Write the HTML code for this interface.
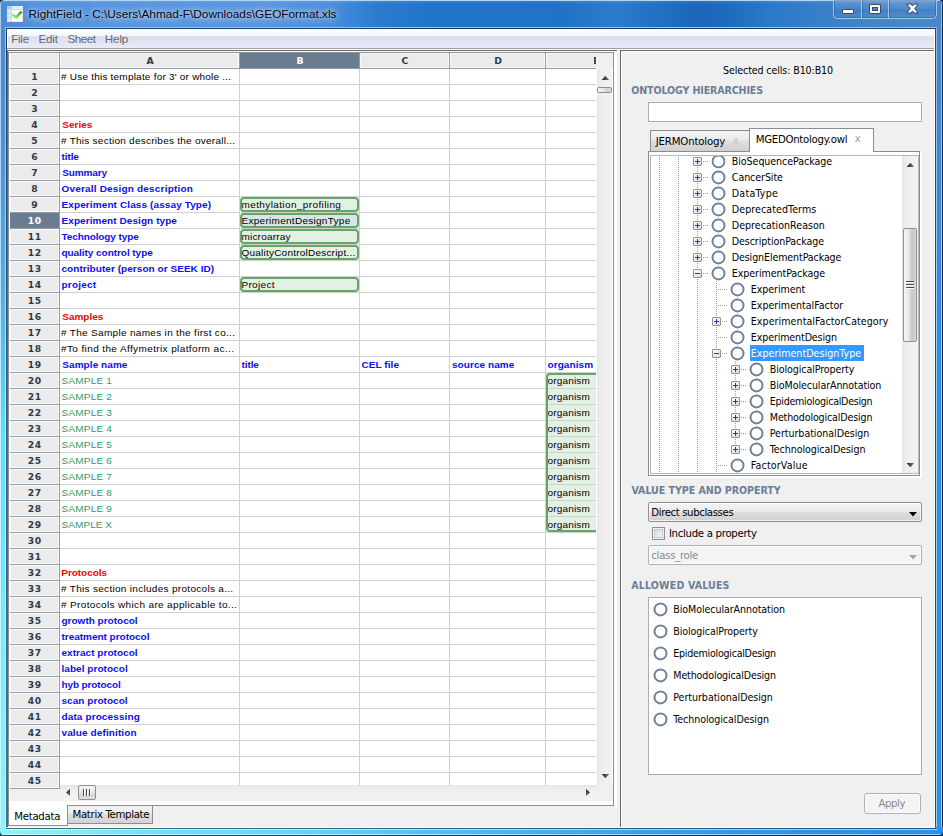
<!DOCTYPE html>
<html><head><meta charset="utf-8"><title>RightField</title>
<style>
html,body{margin:0;padding:0}
body{width:943px;height:836px;overflow:hidden;position:relative;background:#f0f0f0;font-family:'Liberation Sans',sans-serif;font-size:11px;color:#000}
div{position:absolute;box-sizing:border-box;white-space:nowrap}
svg{position:absolute}
.rad{width:14px;height:14px;border:2px solid #6f8199;border-radius:50%;background:#fff;transform:translate(.5px,.4px)}
.exp{width:9px;height:9px;border:1px solid #919191;background:linear-gradient(135deg,#fff,#d9d9d9);border-radius:1px}
.exp:before{content:"";position:absolute;left:1px;top:3px;width:5px;height:1px;background:#2b3f8f}
.exp.p:after{content:"";position:absolute;left:3px;top:1px;width:1px;height:5px;background:#2b3f8f}
.vd{width:1px;background:repeating-linear-gradient(#9a9a9a 0,#9a9a9a 1px,transparent 1px,transparent 2px)}
.hd{height:1px;background:repeating-linear-gradient(90deg,#9a9a9a 0,#9a9a9a 1px,transparent 1px,transparent 2px)}
</style></head><body>

<div style="left:0px;top:0px;width:943px;height:29px;background:linear-gradient(90deg,#4a8bd3 0,#5090da 30px,#5795de 110px,#5795de 260px,#4a8edc 330px,#2c7cd0 375px,#2074c8 430px,#2072c6 560px,#2c7cce 615px,#2371c4 655px,#1c66b8 695px,#1e6abc 725px,#2d79ca 775px,#3a80c8 830px,#4585ca 880px,#4886cb 943px);"></div>
<div style="left:0px;top:1px;width:943px;height:3px;background:linear-gradient(rgba(255,255,255,.10),rgba(255,255,255,0));"></div>
<div style="left:3px;top:0px;width:937px;height:1px;background:#b5d3f0;"></div>
<div style="left:0px;top:29px;width:6px;height:807px;background:linear-gradient(#4a8bd3 0,#4d93d8 15%,#55b4e8 35%,#63dcfd 50%,#7ce8fe 75%,#8cf4ff 100%);"></div>
<div style="left:0px;top:0px;width:1px;height:836px;background:linear-gradient(#a9cbee 0,#b4daf4 30%,#c8f0fb 50%,#c8f6ff 100%);"></div>
<div style="left:5px;top:27px;width:1px;height:802px;background:linear-gradient(#9cc4ec 0,#a8d8f4 30%,#bff4ff 50%,#c4f7ff 100%);"></div>
<div style="left:6px;top:28px;width:1px;height:801px;background:linear-gradient(#1c3e66 0,#25506c 30%,#2f6272 50%,#3f6b72 100%);"></div>
<div style="left:935px;top:28px;width:8px;height:808px;background:linear-gradient(#4786cb 0,#4186d1 10%,#328be0 32%,#2b8fe6 50%,#2b8fe6 100%);"></div>
<div style="left:934px;top:29px;width:1px;height:799px;background:#fff;"></div>
<div style="left:935px;top:28px;width:1px;height:801px;background:#1f4f7a;"></div>
<div style="left:936px;top:27px;width:1px;height:803px;background:linear-gradient(#8fb6e2 0,#a5d0f5 30%,#a5d0f5 100%);"></div>
<div style="left:941px;top:4px;width:1px;height:832px;background:linear-gradient(#8fb6e2 0,#a5d3fa 30%,#a5d3fa 100%);"></div>
<div style="left:942px;top:4px;width:1px;height:832px;background:#06284e;"></div>
<div style="left:937px;top:1px;width:4px;height:28px;background:#4786cb;"></div>
<div style="left:0px;top:827px;width:943px;height:9px;background:linear-gradient(90deg,#8cf4ff 0,#6fe2fc 150px,#5bd7fb 310px,#46bdf3 470px,#35a3ec 640px,#2c92e8 800px,#2b8fe6 943px);"></div>
<div style="left:7px;top:827px;width:928px;height:1px;background:#fff;"></div>
<div style="left:6px;top:828px;width:930px;height:1px;background:linear-gradient(90deg,#3f6b72 0,#2f6678 35%,#25597a 70%,#1f4f7a 100%);"></div>
<div style="left:5px;top:829px;width:932px;height:1px;background:rgba(255,255,255,.58);"></div>
<div style="left:3px;top:834px;width:937px;height:1px;background:rgba(255,255,255,.58);"></div>
<div style="left:3px;top:835px;width:937px;height:1px;background:linear-gradient(90deg,#2a4a50 0,#1a4a5a 35%,#0c3558 70%,#06284e 100%);"></div>
<svg style="left:0;top:0" width="4" height="4"><path d="M0 0H4A4 4 0 0 0 0 4Z" fill="#0a2a55"/></svg>
<svg style="left:939px;top:0" width="4" height="5"><path d="M4 0H0A4 5 0 0 1 4 5Z" fill="#0a2a55"/></svg>
<svg style="left:0;top:831px" width="5" height="5"><path d="M0 5H5A5 5 0 0 1 0 0Z" fill="#2a4a50"/></svg>
<svg style="left:938px;top:831px" width="5" height="5"><path d="M5 5H0A5 5 0 0 0 5 0Z" fill="#06284e"/></svg>
<div style="left:6px;top:27px;width:930px;height:1px;background:#9cc4ec;"></div>
<div style="left:6px;top:28px;width:930px;height:1px;background:#1c3e66;"></div>
<div style="left:7px;top:6px;width:16px;height:16px;background:#fff;border:1px solid #dfe6ef;border-bottom-color:#f1e4d8;border-right-color:#f1e4d8"></div>
<div style="left:7px;top:6px;width:5px;height:16px;background:linear-gradient(#a9ccf8 0,#a9ccf8 3px,#c3d6ec 3px,#c3d6ec 4px,#dce9f8 4px,#dce9f8 7px,#c3d6ec 7px,#c3d6ec 8px,#dce9f8 8px,#dce9f8 11px,#c3d6ec 11px,#c3d6ec 12px,#dce9f8 12px);"></div>
<div style="left:12px;top:6px;width:11px;height:3px;background:#e3edf8;"></div>
<div style="left:11px;top:6px;width:1px;height:16px;background:#c3d6ec;"></div>
<div style="left:7px;top:9px;width:16px;height:1px;background:#c9d9ea;"></div>
<svg style="left:11px;top:9px" width="13" height="12" viewBox="0 0 13 12"><defs><linearGradient id="gk" x1="1" y1="0" x2="0.3" y2="1"><stop offset="0" stop-color="#189418"/><stop offset="1" stop-color="#6cff6c"/></linearGradient></defs><path d="M1.6 5.6 L5 8.6 L10.6 2.6" fill="none" stroke="url(#gk)" stroke-width="2.3" stroke-linejoin="miter"/></svg>
<div style="left:28.5px;top:4px;line-height:20px;font-family:'Liberation Sans',sans-serif;font-size:11.8px;color:#05050f;font-weight:normal;letter-spacing:0.010px;text-shadow:0 0 9px rgba(255,255,255,.8),0 0 6px rgba(255,255,255,.55),0 0 3px rgba(255,255,255,.3)">RightField - C:\Users\Ahmad-F\Downloads\GEOFormat.xls</div>
<div style="left:833px;top:0px;width:104px;height:19px;background:linear-gradient(rgba(255,255,255,.16),rgba(255,255,255,.04) 50%,rgba(0,0,30,.04) 50%,rgba(255,255,255,.06));border:1px solid #a6c6e8;border-top:none;border-radius:0 0 5px 5px;box-shadow:inset 0 0 0 1px rgba(20,60,120,.35)"></div>
<div style="left:861px;top:0px;width:1px;height:18px;background:#a6c6e8;"></div>
<div style="left:862px;top:0px;width:1px;height:18px;background:rgba(20,60,120,.35);"></div>
<div style="left:888px;top:0px;width:1px;height:18px;background:#a6c6e8;"></div>
<div style="left:889px;top:0px;width:1px;height:18px;background:rgba(20,60,120,.35);"></div>
<div style="left:842px;top:9px;width:12px;height:5px;background:#fff;border:1px solid #3c4a62;border-radius:1px"></div>
<div style="left:869px;top:4px;width:12px;height:10px;background:#fff;border:1px solid #3c4a62;border-radius:1px"></div>
<div style="left:872px;top:7px;width:6px;height:4px;background:#4a86c8;border:1px solid #3c4a62"></div>
<svg style="left:906px;top:3px" width="13" height="11" viewBox="0 0 13 11"><path d="M0.8 1 H5 L6.5 3.1 L8 1 H12.2 L8.7 5.5 L12.2 10 H8 L6.5 7.9 L5 10 H0.8 L4.3 5.5 Z" fill="#fff" stroke="#39465c" stroke-width="1"/></svg>
<div style="left:7px;top:29px;width:927px;height:798px;background:#f0f0f0;"></div>
<div style="left:7px;top:29px;width:927px;height:19px;background:linear-gradient(#fefeff 0,#f5f6fb 7px,#dcdfee 7px,#dfe2f0 11px,#e9ebf6 19px);"></div>
<div style="left:7px;top:29px;width:1px;height:19px;background:#fff;"></div>
<div style="left:11.3px;top:29px;line-height:20px;font-family:'Liberation Sans',sans-serif;font-size:11.6px;color:#6a676c;font-weight:normal;letter-spacing:-0.297px;">File</div>
<div style="left:38.4px;top:29px;line-height:20px;font-family:'Liberation Sans',sans-serif;font-size:11.6px;color:#6a676c;font-weight:normal;letter-spacing:-0.146px;">Edit</div>
<div style="left:67.4px;top:29px;line-height:20px;font-family:'Liberation Sans',sans-serif;font-size:11.6px;color:#6a676c;font-weight:normal;letter-spacing:-0.423px;">Sheet</div>
<div style="left:104.8px;top:29px;line-height:20px;font-family:'Liberation Sans',sans-serif;font-size:11.6px;color:#6a676c;font-weight:normal;letter-spacing:-0.115px;">Help</div>
<div style="left:7px;top:48px;width:927px;height:1px;background:#a0a0a0;"></div>
<div style="left:7px;top:49px;width:927px;height:1px;background:#fff;"></div>
<div style="left:7px;top:50px;width:610px;height:777px;background:#fff;"></div>
<div style="left:7px;top:50px;width:610px;height:1px;background:#696969;"></div>
<div style="left:7px;top:50px;width:1px;height:777px;background:#696969;"></div>
<div style="left:8px;top:806px;width:609px;height:21px;background:#f0f0f0;"></div>
<div style="left:8px;top:52px;width:606px;height:754px;background:#8b909b;"></div>
<div style="left:9px;top:53px;width:604px;height:752px;background:#fff;"></div>
<div style="left:618px;top:50px;width:2px;height:777px;background:#f0f0f0;"></div>
<div style="left:614px;top:806px;width:2px;height:21px;background:#f0f0f0;"></div>
<div style="left:10px;top:53px;width:603px;height:16px;background:#f0f0f0;"></div>
<div style="left:10px;top:53px;width:586px;height:15px;background:#ebebeb;"></div>
<div style="left:10px;top:69px;width:49px;height:720px;background:#ebebeb;"></div>
<div style="left:10px;top:789px;width:50px;height:12px;background:#f0f0f0;"></div>
<div style="left:60px;top:53px;width:179px;height:15px;background:transparent;border:1px solid #f9f9f9"></div>
<div style="left:60px;top:51px;width:180px;line-height:20px;text-align:center;font-family:'DejaVu Sans','Liberation Sans',sans-serif;font-weight:bold;font-size:9.3px;color:#2f3b48">A</div>
<div style="left:240px;top:53px;width:119px;height:15px;background:#6b7c8e;"></div>
<div style="left:240px;top:51px;width:120px;line-height:20px;text-align:center;font-family:'DejaVu Sans','Liberation Sans',sans-serif;font-weight:bold;font-size:9.3px;color:#fff">B</div>
<div style="left:360px;top:53px;width:89px;height:15px;background:transparent;border:1px solid #f9f9f9"></div>
<div style="left:360px;top:51px;width:90px;line-height:20px;text-align:center;font-family:'DejaVu Sans','Liberation Sans',sans-serif;font-weight:bold;font-size:9.3px;color:#2f3b48">C</div>
<div style="left:450px;top:53px;width:95px;height:15px;background:transparent;border:1px solid #f9f9f9"></div>
<div style="left:450px;top:51px;width:96px;line-height:20px;text-align:center;font-family:'DejaVu Sans','Liberation Sans',sans-serif;font-weight:bold;font-size:9.3px;color:#2f3b48">D</div>
<div style="left:10px;top:53px;width:49px;height:15px;background:transparent;border:1px solid #f9f9f9"></div>
<div style="left:546px;top:53px;width:50px;height:15px;background:transparent;border:1px solid #f9f9f9;border-right:none"></div>
<div style="left:594px;top:51px;width:2px;height:20px;overflow:hidden;line-height:20px;font-family:'DejaVu Sans','Liberation Sans',sans-serif;font-weight:bold;font-size:9.3px;color:#2f3b48;text-indent:-1px">E</div>
<div style="left:10px;top:68px;width:586px;height:1px;background:#8b9db1;"></div>
<div style="left:59px;top:53px;width:1px;height:15px;background:#8b9db1;"></div>
<div style="left:239px;top:53px;width:1px;height:15px;background:#8b9db1;"></div>
<div style="left:359px;top:53px;width:1px;height:15px;background:#8b9db1;"></div>
<div style="left:449px;top:53px;width:1px;height:15px;background:#8b9db1;"></div>
<div style="left:545px;top:53px;width:1px;height:15px;background:#8b9db1;"></div>
<div style="left:59px;top:69px;width:1px;height:720px;background:#8b9db1;"></div>
<div style="left:239px;top:69px;width:1px;height:716px;background:#d0d0d0;"></div>
<div style="left:359px;top:69px;width:1px;height:716px;background:#d0d0d0;"></div>
<div style="left:449px;top:69px;width:1px;height:716px;background:#d0d0d0;"></div>
<div style="left:545px;top:69px;width:1px;height:716px;background:#d0d0d0;"></div>
<div style="left:60px;top:84px;width:536px;height:1px;background:#d0d0d0;"></div>
<div style="left:10px;top:84px;width:49px;height:1px;background:#8b9db1;"></div>
<div style="left:60px;top:100px;width:536px;height:1px;background:#d0d0d0;"></div>
<div style="left:10px;top:100px;width:49px;height:1px;background:#8b9db1;"></div>
<div style="left:60px;top:116px;width:536px;height:1px;background:#d0d0d0;"></div>
<div style="left:10px;top:116px;width:49px;height:1px;background:#8b9db1;"></div>
<div style="left:60px;top:132px;width:536px;height:1px;background:#d0d0d0;"></div>
<div style="left:10px;top:132px;width:49px;height:1px;background:#8b9db1;"></div>
<div style="left:60px;top:148px;width:536px;height:1px;background:#d0d0d0;"></div>
<div style="left:10px;top:148px;width:49px;height:1px;background:#8b9db1;"></div>
<div style="left:60px;top:164px;width:536px;height:1px;background:#d0d0d0;"></div>
<div style="left:10px;top:164px;width:49px;height:1px;background:#8b9db1;"></div>
<div style="left:60px;top:180px;width:536px;height:1px;background:#d0d0d0;"></div>
<div style="left:10px;top:180px;width:49px;height:1px;background:#8b9db1;"></div>
<div style="left:60px;top:196px;width:536px;height:1px;background:#d0d0d0;"></div>
<div style="left:10px;top:196px;width:49px;height:1px;background:#8b9db1;"></div>
<div style="left:60px;top:212px;width:536px;height:1px;background:#d0d0d0;"></div>
<div style="left:10px;top:212px;width:49px;height:1px;background:#8b9db1;"></div>
<div style="left:60px;top:228px;width:536px;height:1px;background:#d0d0d0;"></div>
<div style="left:10px;top:228px;width:49px;height:1px;background:#8b9db1;"></div>
<div style="left:60px;top:244px;width:536px;height:1px;background:#d0d0d0;"></div>
<div style="left:10px;top:244px;width:49px;height:1px;background:#8b9db1;"></div>
<div style="left:60px;top:260px;width:536px;height:1px;background:#d0d0d0;"></div>
<div style="left:10px;top:260px;width:49px;height:1px;background:#8b9db1;"></div>
<div style="left:60px;top:276px;width:536px;height:1px;background:#d0d0d0;"></div>
<div style="left:10px;top:276px;width:49px;height:1px;background:#8b9db1;"></div>
<div style="left:60px;top:292px;width:536px;height:1px;background:#d0d0d0;"></div>
<div style="left:10px;top:292px;width:49px;height:1px;background:#8b9db1;"></div>
<div style="left:60px;top:308px;width:536px;height:1px;background:#d0d0d0;"></div>
<div style="left:10px;top:308px;width:49px;height:1px;background:#8b9db1;"></div>
<div style="left:60px;top:324px;width:536px;height:1px;background:#d0d0d0;"></div>
<div style="left:10px;top:324px;width:49px;height:1px;background:#8b9db1;"></div>
<div style="left:60px;top:340px;width:536px;height:1px;background:#d0d0d0;"></div>
<div style="left:10px;top:340px;width:49px;height:1px;background:#8b9db1;"></div>
<div style="left:60px;top:356px;width:536px;height:1px;background:#d0d0d0;"></div>
<div style="left:10px;top:356px;width:49px;height:1px;background:#8b9db1;"></div>
<div style="left:60px;top:372px;width:536px;height:1px;background:#d0d0d0;"></div>
<div style="left:10px;top:372px;width:49px;height:1px;background:#8b9db1;"></div>
<div style="left:60px;top:388px;width:536px;height:1px;background:#d0d0d0;"></div>
<div style="left:10px;top:388px;width:49px;height:1px;background:#8b9db1;"></div>
<div style="left:60px;top:404px;width:536px;height:1px;background:#d0d0d0;"></div>
<div style="left:10px;top:404px;width:49px;height:1px;background:#8b9db1;"></div>
<div style="left:60px;top:420px;width:536px;height:1px;background:#d0d0d0;"></div>
<div style="left:10px;top:420px;width:49px;height:1px;background:#8b9db1;"></div>
<div style="left:60px;top:436px;width:536px;height:1px;background:#d0d0d0;"></div>
<div style="left:10px;top:436px;width:49px;height:1px;background:#8b9db1;"></div>
<div style="left:60px;top:452px;width:536px;height:1px;background:#d0d0d0;"></div>
<div style="left:10px;top:452px;width:49px;height:1px;background:#8b9db1;"></div>
<div style="left:60px;top:468px;width:536px;height:1px;background:#d0d0d0;"></div>
<div style="left:10px;top:468px;width:49px;height:1px;background:#8b9db1;"></div>
<div style="left:60px;top:484px;width:536px;height:1px;background:#d0d0d0;"></div>
<div style="left:10px;top:484px;width:49px;height:1px;background:#8b9db1;"></div>
<div style="left:60px;top:500px;width:536px;height:1px;background:#d0d0d0;"></div>
<div style="left:10px;top:500px;width:49px;height:1px;background:#8b9db1;"></div>
<div style="left:60px;top:516px;width:536px;height:1px;background:#d0d0d0;"></div>
<div style="left:10px;top:516px;width:49px;height:1px;background:#8b9db1;"></div>
<div style="left:60px;top:532px;width:536px;height:1px;background:#d0d0d0;"></div>
<div style="left:10px;top:532px;width:49px;height:1px;background:#8b9db1;"></div>
<div style="left:60px;top:548px;width:536px;height:1px;background:#d0d0d0;"></div>
<div style="left:10px;top:548px;width:49px;height:1px;background:#8b9db1;"></div>
<div style="left:60px;top:564px;width:536px;height:1px;background:#d0d0d0;"></div>
<div style="left:10px;top:564px;width:49px;height:1px;background:#8b9db1;"></div>
<div style="left:60px;top:580px;width:536px;height:1px;background:#d0d0d0;"></div>
<div style="left:10px;top:580px;width:49px;height:1px;background:#8b9db1;"></div>
<div style="left:60px;top:596px;width:536px;height:1px;background:#d0d0d0;"></div>
<div style="left:10px;top:596px;width:49px;height:1px;background:#8b9db1;"></div>
<div style="left:60px;top:612px;width:536px;height:1px;background:#d0d0d0;"></div>
<div style="left:10px;top:612px;width:49px;height:1px;background:#8b9db1;"></div>
<div style="left:60px;top:628px;width:536px;height:1px;background:#d0d0d0;"></div>
<div style="left:10px;top:628px;width:49px;height:1px;background:#8b9db1;"></div>
<div style="left:60px;top:644px;width:536px;height:1px;background:#d0d0d0;"></div>
<div style="left:10px;top:644px;width:49px;height:1px;background:#8b9db1;"></div>
<div style="left:60px;top:660px;width:536px;height:1px;background:#d0d0d0;"></div>
<div style="left:10px;top:660px;width:49px;height:1px;background:#8b9db1;"></div>
<div style="left:60px;top:676px;width:536px;height:1px;background:#d0d0d0;"></div>
<div style="left:10px;top:676px;width:49px;height:1px;background:#8b9db1;"></div>
<div style="left:60px;top:692px;width:536px;height:1px;background:#d0d0d0;"></div>
<div style="left:10px;top:692px;width:49px;height:1px;background:#8b9db1;"></div>
<div style="left:60px;top:708px;width:536px;height:1px;background:#d0d0d0;"></div>
<div style="left:10px;top:708px;width:49px;height:1px;background:#8b9db1;"></div>
<div style="left:60px;top:724px;width:536px;height:1px;background:#d0d0d0;"></div>
<div style="left:10px;top:724px;width:49px;height:1px;background:#8b9db1;"></div>
<div style="left:60px;top:740px;width:536px;height:1px;background:#d0d0d0;"></div>
<div style="left:10px;top:740px;width:49px;height:1px;background:#8b9db1;"></div>
<div style="left:60px;top:756px;width:536px;height:1px;background:#d0d0d0;"></div>
<div style="left:10px;top:756px;width:49px;height:1px;background:#8b9db1;"></div>
<div style="left:60px;top:772px;width:536px;height:1px;background:#d0d0d0;"></div>
<div style="left:10px;top:772px;width:49px;height:1px;background:#8b9db1;"></div>
<div style="left:10px;top:788px;width:49px;height:1px;background:#8b9db1;"></div>
<div style="left:10px;top:69px;width:49px;height:15px;background:transparent;border:1px solid #f9f9f9"></div>
<div style="left:10px;top:67px;width:49px;line-height:20px;text-align:center;font-family:'DejaVu Sans','Liberation Sans',sans-serif;font-weight:bold;font-size:9.2px;letter-spacing:0.5px;padding-left:0.5px;color:#2f3b48">1</div>
<div style="left:10px;top:85px;width:49px;height:15px;background:transparent;border:1px solid #f9f9f9"></div>
<div style="left:10px;top:83px;width:49px;line-height:20px;text-align:center;font-family:'DejaVu Sans','Liberation Sans',sans-serif;font-weight:bold;font-size:9.2px;letter-spacing:0.5px;padding-left:0.5px;color:#2f3b48">2</div>
<div style="left:10px;top:101px;width:49px;height:15px;background:transparent;border:1px solid #f9f9f9"></div>
<div style="left:10px;top:99px;width:49px;line-height:20px;text-align:center;font-family:'DejaVu Sans','Liberation Sans',sans-serif;font-weight:bold;font-size:9.2px;letter-spacing:0.5px;padding-left:0.5px;color:#2f3b48">3</div>
<div style="left:10px;top:117px;width:49px;height:15px;background:transparent;border:1px solid #f9f9f9"></div>
<div style="left:10px;top:115px;width:49px;line-height:20px;text-align:center;font-family:'DejaVu Sans','Liberation Sans',sans-serif;font-weight:bold;font-size:9.2px;letter-spacing:0.5px;padding-left:0.5px;color:#2f3b48">4</div>
<div style="left:10px;top:133px;width:49px;height:15px;background:transparent;border:1px solid #f9f9f9"></div>
<div style="left:10px;top:131px;width:49px;line-height:20px;text-align:center;font-family:'DejaVu Sans','Liberation Sans',sans-serif;font-weight:bold;font-size:9.2px;letter-spacing:0.5px;padding-left:0.5px;color:#2f3b48">5</div>
<div style="left:10px;top:149px;width:49px;height:15px;background:transparent;border:1px solid #f9f9f9"></div>
<div style="left:10px;top:147px;width:49px;line-height:20px;text-align:center;font-family:'DejaVu Sans','Liberation Sans',sans-serif;font-weight:bold;font-size:9.2px;letter-spacing:0.5px;padding-left:0.5px;color:#2f3b48">6</div>
<div style="left:10px;top:165px;width:49px;height:15px;background:transparent;border:1px solid #f9f9f9"></div>
<div style="left:10px;top:163px;width:49px;line-height:20px;text-align:center;font-family:'DejaVu Sans','Liberation Sans',sans-serif;font-weight:bold;font-size:9.2px;letter-spacing:0.5px;padding-left:0.5px;color:#2f3b48">7</div>
<div style="left:10px;top:181px;width:49px;height:15px;background:transparent;border:1px solid #f9f9f9"></div>
<div style="left:10px;top:179px;width:49px;line-height:20px;text-align:center;font-family:'DejaVu Sans','Liberation Sans',sans-serif;font-weight:bold;font-size:9.2px;letter-spacing:0.5px;padding-left:0.5px;color:#2f3b48">8</div>
<div style="left:10px;top:197px;width:49px;height:15px;background:transparent;border:1px solid #f9f9f9"></div>
<div style="left:10px;top:195px;width:49px;line-height:20px;text-align:center;font-family:'DejaVu Sans','Liberation Sans',sans-serif;font-weight:bold;font-size:9.2px;letter-spacing:0.5px;padding-left:0.5px;color:#2f3b48">9</div>
<div style="left:10px;top:213px;width:49px;height:15px;background:#6b7c8e;"></div>
<div style="left:10px;top:211px;width:49px;line-height:20px;text-align:center;font-family:'DejaVu Sans','Liberation Sans',sans-serif;font-weight:bold;font-size:9.2px;letter-spacing:0.5px;padding-left:0.5px;color:#fff">10</div>
<div style="left:10px;top:229px;width:49px;height:15px;background:transparent;border:1px solid #f9f9f9"></div>
<div style="left:10px;top:227px;width:49px;line-height:20px;text-align:center;font-family:'DejaVu Sans','Liberation Sans',sans-serif;font-weight:bold;font-size:9.2px;letter-spacing:0.5px;padding-left:0.5px;color:#2f3b48">11</div>
<div style="left:10px;top:245px;width:49px;height:15px;background:transparent;border:1px solid #f9f9f9"></div>
<div style="left:10px;top:243px;width:49px;line-height:20px;text-align:center;font-family:'DejaVu Sans','Liberation Sans',sans-serif;font-weight:bold;font-size:9.2px;letter-spacing:0.5px;padding-left:0.5px;color:#2f3b48">12</div>
<div style="left:10px;top:261px;width:49px;height:15px;background:transparent;border:1px solid #f9f9f9"></div>
<div style="left:10px;top:259px;width:49px;line-height:20px;text-align:center;font-family:'DejaVu Sans','Liberation Sans',sans-serif;font-weight:bold;font-size:9.2px;letter-spacing:0.5px;padding-left:0.5px;color:#2f3b48">13</div>
<div style="left:10px;top:277px;width:49px;height:15px;background:transparent;border:1px solid #f9f9f9"></div>
<div style="left:10px;top:275px;width:49px;line-height:20px;text-align:center;font-family:'DejaVu Sans','Liberation Sans',sans-serif;font-weight:bold;font-size:9.2px;letter-spacing:0.5px;padding-left:0.5px;color:#2f3b48">14</div>
<div style="left:10px;top:293px;width:49px;height:15px;background:transparent;border:1px solid #f9f9f9"></div>
<div style="left:10px;top:291px;width:49px;line-height:20px;text-align:center;font-family:'DejaVu Sans','Liberation Sans',sans-serif;font-weight:bold;font-size:9.2px;letter-spacing:0.5px;padding-left:0.5px;color:#2f3b48">15</div>
<div style="left:10px;top:309px;width:49px;height:15px;background:transparent;border:1px solid #f9f9f9"></div>
<div style="left:10px;top:307px;width:49px;line-height:20px;text-align:center;font-family:'DejaVu Sans','Liberation Sans',sans-serif;font-weight:bold;font-size:9.2px;letter-spacing:0.5px;padding-left:0.5px;color:#2f3b48">16</div>
<div style="left:10px;top:325px;width:49px;height:15px;background:transparent;border:1px solid #f9f9f9"></div>
<div style="left:10px;top:323px;width:49px;line-height:20px;text-align:center;font-family:'DejaVu Sans','Liberation Sans',sans-serif;font-weight:bold;font-size:9.2px;letter-spacing:0.5px;padding-left:0.5px;color:#2f3b48">17</div>
<div style="left:10px;top:341px;width:49px;height:15px;background:transparent;border:1px solid #f9f9f9"></div>
<div style="left:10px;top:339px;width:49px;line-height:20px;text-align:center;font-family:'DejaVu Sans','Liberation Sans',sans-serif;font-weight:bold;font-size:9.2px;letter-spacing:0.5px;padding-left:0.5px;color:#2f3b48">18</div>
<div style="left:10px;top:357px;width:49px;height:15px;background:transparent;border:1px solid #f9f9f9"></div>
<div style="left:10px;top:355px;width:49px;line-height:20px;text-align:center;font-family:'DejaVu Sans','Liberation Sans',sans-serif;font-weight:bold;font-size:9.2px;letter-spacing:0.5px;padding-left:0.5px;color:#2f3b48">19</div>
<div style="left:10px;top:373px;width:49px;height:15px;background:transparent;border:1px solid #f9f9f9"></div>
<div style="left:10px;top:371px;width:49px;line-height:20px;text-align:center;font-family:'DejaVu Sans','Liberation Sans',sans-serif;font-weight:bold;font-size:9.2px;letter-spacing:0.5px;padding-left:0.5px;color:#2f3b48">20</div>
<div style="left:10px;top:389px;width:49px;height:15px;background:transparent;border:1px solid #f9f9f9"></div>
<div style="left:10px;top:387px;width:49px;line-height:20px;text-align:center;font-family:'DejaVu Sans','Liberation Sans',sans-serif;font-weight:bold;font-size:9.2px;letter-spacing:0.5px;padding-left:0.5px;color:#2f3b48">21</div>
<div style="left:10px;top:405px;width:49px;height:15px;background:transparent;border:1px solid #f9f9f9"></div>
<div style="left:10px;top:403px;width:49px;line-height:20px;text-align:center;font-family:'DejaVu Sans','Liberation Sans',sans-serif;font-weight:bold;font-size:9.2px;letter-spacing:0.5px;padding-left:0.5px;color:#2f3b48">22</div>
<div style="left:10px;top:421px;width:49px;height:15px;background:transparent;border:1px solid #f9f9f9"></div>
<div style="left:10px;top:419px;width:49px;line-height:20px;text-align:center;font-family:'DejaVu Sans','Liberation Sans',sans-serif;font-weight:bold;font-size:9.2px;letter-spacing:0.5px;padding-left:0.5px;color:#2f3b48">23</div>
<div style="left:10px;top:437px;width:49px;height:15px;background:transparent;border:1px solid #f9f9f9"></div>
<div style="left:10px;top:435px;width:49px;line-height:20px;text-align:center;font-family:'DejaVu Sans','Liberation Sans',sans-serif;font-weight:bold;font-size:9.2px;letter-spacing:0.5px;padding-left:0.5px;color:#2f3b48">24</div>
<div style="left:10px;top:453px;width:49px;height:15px;background:transparent;border:1px solid #f9f9f9"></div>
<div style="left:10px;top:451px;width:49px;line-height:20px;text-align:center;font-family:'DejaVu Sans','Liberation Sans',sans-serif;font-weight:bold;font-size:9.2px;letter-spacing:0.5px;padding-left:0.5px;color:#2f3b48">25</div>
<div style="left:10px;top:469px;width:49px;height:15px;background:transparent;border:1px solid #f9f9f9"></div>
<div style="left:10px;top:467px;width:49px;line-height:20px;text-align:center;font-family:'DejaVu Sans','Liberation Sans',sans-serif;font-weight:bold;font-size:9.2px;letter-spacing:0.5px;padding-left:0.5px;color:#2f3b48">26</div>
<div style="left:10px;top:485px;width:49px;height:15px;background:transparent;border:1px solid #f9f9f9"></div>
<div style="left:10px;top:483px;width:49px;line-height:20px;text-align:center;font-family:'DejaVu Sans','Liberation Sans',sans-serif;font-weight:bold;font-size:9.2px;letter-spacing:0.5px;padding-left:0.5px;color:#2f3b48">27</div>
<div style="left:10px;top:501px;width:49px;height:15px;background:transparent;border:1px solid #f9f9f9"></div>
<div style="left:10px;top:499px;width:49px;line-height:20px;text-align:center;font-family:'DejaVu Sans','Liberation Sans',sans-serif;font-weight:bold;font-size:9.2px;letter-spacing:0.5px;padding-left:0.5px;color:#2f3b48">28</div>
<div style="left:10px;top:517px;width:49px;height:15px;background:transparent;border:1px solid #f9f9f9"></div>
<div style="left:10px;top:515px;width:49px;line-height:20px;text-align:center;font-family:'DejaVu Sans','Liberation Sans',sans-serif;font-weight:bold;font-size:9.2px;letter-spacing:0.5px;padding-left:0.5px;color:#2f3b48">29</div>
<div style="left:10px;top:533px;width:49px;height:15px;background:transparent;border:1px solid #f9f9f9"></div>
<div style="left:10px;top:531px;width:49px;line-height:20px;text-align:center;font-family:'DejaVu Sans','Liberation Sans',sans-serif;font-weight:bold;font-size:9.2px;letter-spacing:0.5px;padding-left:0.5px;color:#2f3b48">30</div>
<div style="left:10px;top:549px;width:49px;height:15px;background:transparent;border:1px solid #f9f9f9"></div>
<div style="left:10px;top:547px;width:49px;line-height:20px;text-align:center;font-family:'DejaVu Sans','Liberation Sans',sans-serif;font-weight:bold;font-size:9.2px;letter-spacing:0.5px;padding-left:0.5px;color:#2f3b48">31</div>
<div style="left:10px;top:565px;width:49px;height:15px;background:transparent;border:1px solid #f9f9f9"></div>
<div style="left:10px;top:563px;width:49px;line-height:20px;text-align:center;font-family:'DejaVu Sans','Liberation Sans',sans-serif;font-weight:bold;font-size:9.2px;letter-spacing:0.5px;padding-left:0.5px;color:#2f3b48">32</div>
<div style="left:10px;top:581px;width:49px;height:15px;background:transparent;border:1px solid #f9f9f9"></div>
<div style="left:10px;top:579px;width:49px;line-height:20px;text-align:center;font-family:'DejaVu Sans','Liberation Sans',sans-serif;font-weight:bold;font-size:9.2px;letter-spacing:0.5px;padding-left:0.5px;color:#2f3b48">33</div>
<div style="left:10px;top:597px;width:49px;height:15px;background:transparent;border:1px solid #f9f9f9"></div>
<div style="left:10px;top:595px;width:49px;line-height:20px;text-align:center;font-family:'DejaVu Sans','Liberation Sans',sans-serif;font-weight:bold;font-size:9.2px;letter-spacing:0.5px;padding-left:0.5px;color:#2f3b48">34</div>
<div style="left:10px;top:613px;width:49px;height:15px;background:transparent;border:1px solid #f9f9f9"></div>
<div style="left:10px;top:611px;width:49px;line-height:20px;text-align:center;font-family:'DejaVu Sans','Liberation Sans',sans-serif;font-weight:bold;font-size:9.2px;letter-spacing:0.5px;padding-left:0.5px;color:#2f3b48">35</div>
<div style="left:10px;top:629px;width:49px;height:15px;background:transparent;border:1px solid #f9f9f9"></div>
<div style="left:10px;top:627px;width:49px;line-height:20px;text-align:center;font-family:'DejaVu Sans','Liberation Sans',sans-serif;font-weight:bold;font-size:9.2px;letter-spacing:0.5px;padding-left:0.5px;color:#2f3b48">36</div>
<div style="left:10px;top:645px;width:49px;height:15px;background:transparent;border:1px solid #f9f9f9"></div>
<div style="left:10px;top:643px;width:49px;line-height:20px;text-align:center;font-family:'DejaVu Sans','Liberation Sans',sans-serif;font-weight:bold;font-size:9.2px;letter-spacing:0.5px;padding-left:0.5px;color:#2f3b48">37</div>
<div style="left:10px;top:661px;width:49px;height:15px;background:transparent;border:1px solid #f9f9f9"></div>
<div style="left:10px;top:659px;width:49px;line-height:20px;text-align:center;font-family:'DejaVu Sans','Liberation Sans',sans-serif;font-weight:bold;font-size:9.2px;letter-spacing:0.5px;padding-left:0.5px;color:#2f3b48">38</div>
<div style="left:10px;top:677px;width:49px;height:15px;background:transparent;border:1px solid #f9f9f9"></div>
<div style="left:10px;top:675px;width:49px;line-height:20px;text-align:center;font-family:'DejaVu Sans','Liberation Sans',sans-serif;font-weight:bold;font-size:9.2px;letter-spacing:0.5px;padding-left:0.5px;color:#2f3b48">39</div>
<div style="left:10px;top:693px;width:49px;height:15px;background:transparent;border:1px solid #f9f9f9"></div>
<div style="left:10px;top:691px;width:49px;line-height:20px;text-align:center;font-family:'DejaVu Sans','Liberation Sans',sans-serif;font-weight:bold;font-size:9.2px;letter-spacing:0.5px;padding-left:0.5px;color:#2f3b48">40</div>
<div style="left:10px;top:709px;width:49px;height:15px;background:transparent;border:1px solid #f9f9f9"></div>
<div style="left:10px;top:707px;width:49px;line-height:20px;text-align:center;font-family:'DejaVu Sans','Liberation Sans',sans-serif;font-weight:bold;font-size:9.2px;letter-spacing:0.5px;padding-left:0.5px;color:#2f3b48">41</div>
<div style="left:10px;top:725px;width:49px;height:15px;background:transparent;border:1px solid #f9f9f9"></div>
<div style="left:10px;top:723px;width:49px;line-height:20px;text-align:center;font-family:'DejaVu Sans','Liberation Sans',sans-serif;font-weight:bold;font-size:9.2px;letter-spacing:0.5px;padding-left:0.5px;color:#2f3b48">42</div>
<div style="left:10px;top:741px;width:49px;height:15px;background:transparent;border:1px solid #f9f9f9"></div>
<div style="left:10px;top:739px;width:49px;line-height:20px;text-align:center;font-family:'DejaVu Sans','Liberation Sans',sans-serif;font-weight:bold;font-size:9.2px;letter-spacing:0.5px;padding-left:0.5px;color:#2f3b48">43</div>
<div style="left:10px;top:757px;width:49px;height:15px;background:transparent;border:1px solid #f9f9f9"></div>
<div style="left:10px;top:755px;width:49px;line-height:20px;text-align:center;font-family:'DejaVu Sans','Liberation Sans',sans-serif;font-weight:bold;font-size:9.2px;letter-spacing:0.5px;padding-left:0.5px;color:#2f3b48">44</div>
<div style="left:10px;top:773px;width:49px;height:15px;background:transparent;border:1px solid #f9f9f9"></div>
<div style="left:10px;top:771px;width:49px;line-height:20px;text-align:center;font-family:'DejaVu Sans','Liberation Sans',sans-serif;font-weight:bold;font-size:9.2px;letter-spacing:0.5px;padding-left:0.5px;color:#2f3b48">45</div>
<div style="left:61px;top:67px;line-height:20px;font-family:'Liberation Sans',sans-serif;font-size:10px;color:#000;font-weight:normal;letter-spacing:0.213px;;transform:scaleY(0.875);transform-origin:0 13px"># Use this template for 3' or whole ...</div>
<div style="left:62.3px;top:115px;line-height:20px;font-family:'Liberation Sans',sans-serif;font-size:10px;color:#ff0000;font-weight:bold;letter-spacing:-0.005px;;transform:scaleY(0.875);transform-origin:0 13px">Series</div>
<div style="left:61px;top:131px;line-height:20px;font-family:'Liberation Sans',sans-serif;font-size:10px;color:#000;font-weight:normal;letter-spacing:0.255px;;transform:scaleY(0.875);transform-origin:0 13px"># This section describes the overall...</div>
<div style="left:61.5px;top:147px;line-height:20px;font-family:'Liberation Sans',sans-serif;font-size:10px;color:#0c0cff;font-weight:bold;letter-spacing:-0.096px;;transform:scaleY(0.875);transform-origin:0 13px">title</div>
<div style="left:62.3px;top:163px;line-height:20px;font-family:'Liberation Sans',sans-serif;font-size:10px;color:#0c0cff;font-weight:bold;letter-spacing:-0.125px;;transform:scaleY(0.875);transform-origin:0 13px">Summary</div>
<div style="left:61.5px;top:179px;line-height:20px;font-family:'Liberation Sans',sans-serif;font-size:10px;color:#0c0cff;font-weight:bold;letter-spacing:0.184px;;transform:scaleY(0.875);transform-origin:0 13px">Overall Design description</div>
<div style="left:61.5px;top:195px;line-height:20px;font-family:'Liberation Sans',sans-serif;font-size:10px;color:#0c0cff;font-weight:bold;letter-spacing:0.108px;;transform:scaleY(0.875);transform-origin:0 13px">Experiment Class (assay Type)</div>
<div style="left:61.5px;top:211px;line-height:20px;font-family:'Liberation Sans',sans-serif;font-size:10px;color:#0c0cff;font-weight:bold;letter-spacing:0.072px;;transform:scaleY(0.875);transform-origin:0 13px">Experiment Design type</div>
<div style="left:61.5px;top:227px;line-height:20px;font-family:'Liberation Sans',sans-serif;font-size:10px;color:#0c0cff;font-weight:bold;letter-spacing:-0.108px;;transform:scaleY(0.875);transform-origin:0 13px">Technology type</div>
<div style="left:61.5px;top:243px;line-height:20px;font-family:'Liberation Sans',sans-serif;font-size:10px;color:#0c0cff;font-weight:bold;letter-spacing:-0.052px;;transform:scaleY(0.875);transform-origin:0 13px">quality control type</div>
<div style="left:61.5px;top:259px;line-height:20px;font-family:'Liberation Sans',sans-serif;font-size:10px;color:#0c0cff;font-weight:bold;letter-spacing:0.051px;;transform:scaleY(0.875);transform-origin:0 13px">contributer (person or SEEK ID)</div>
<div style="left:61.5px;top:275px;line-height:20px;font-family:'Liberation Sans',sans-serif;font-size:10px;color:#0c0cff;font-weight:bold;letter-spacing:0.208px;;transform:scaleY(0.875);transform-origin:0 13px">project</div>
<div style="left:62.3px;top:307px;line-height:20px;font-family:'Liberation Sans',sans-serif;font-size:10px;color:#ff0000;font-weight:bold;letter-spacing:-0.020px;;transform:scaleY(0.875);transform-origin:0 13px">Samples</div>
<div style="left:61px;top:323px;line-height:20px;font-family:'Liberation Sans',sans-serif;font-size:10px;color:#000;font-weight:normal;letter-spacing:0.314px;;transform:scaleY(0.875);transform-origin:0 13px"># The Sample names in the first co...</div>
<div style="left:61px;top:339px;line-height:20px;font-family:'Liberation Sans',sans-serif;font-size:10px;color:#000;font-weight:normal;letter-spacing:0.382px;;transform:scaleY(0.875);transform-origin:0 13px">#To find the Affymetrix platform ac...</div>
<div style="left:62.3px;top:355px;line-height:20px;font-family:'Liberation Sans',sans-serif;font-size:10px;color:#0c0cff;font-weight:bold;letter-spacing:0.065px;;transform:scaleY(0.875);transform-origin:0 13px">Sample name</div>
<div style="left:61.3px;top:563px;line-height:20px;font-family:'Liberation Sans',sans-serif;font-size:10px;color:#ff0000;font-weight:bold;letter-spacing:-0.047px;;transform:scaleY(0.875);transform-origin:0 13px">Protocols</div>
<div style="left:61px;top:579px;line-height:20px;font-family:'Liberation Sans',sans-serif;font-size:10px;color:#000;font-weight:normal;letter-spacing:0.300px;;transform:scaleY(0.875);transform-origin:0 13px"># This section includes protocols a...</div>
<div style="left:61px;top:595px;line-height:20px;font-family:'Liberation Sans',sans-serif;font-size:10px;color:#000;font-weight:normal;letter-spacing:0.351px;;transform:scaleY(0.875);transform-origin:0 13px"># Protocols which are applicable to...</div>
<div style="left:61.5px;top:611px;line-height:20px;font-family:'Liberation Sans',sans-serif;font-size:10px;color:#0c0cff;font-weight:bold;letter-spacing:-0.001px;;transform:scaleY(0.875);transform-origin:0 13px">growth protocol</div>
<div style="left:61.5px;top:627px;line-height:20px;font-family:'Liberation Sans',sans-serif;font-size:10px;color:#0c0cff;font-weight:bold;letter-spacing:-0.025px;;transform:scaleY(0.875);transform-origin:0 13px">treatment protocol</div>
<div style="left:61.5px;top:643px;line-height:20px;font-family:'Liberation Sans',sans-serif;font-size:10px;color:#0c0cff;font-weight:bold;letter-spacing:0.033px;;transform:scaleY(0.875);transform-origin:0 13px">extract protocol</div>
<div style="left:61.5px;top:659px;line-height:20px;font-family:'Liberation Sans',sans-serif;font-size:10px;color:#0c0cff;font-weight:bold;letter-spacing:0.046px;;transform:scaleY(0.875);transform-origin:0 13px">label protocol</div>
<div style="left:61.5px;top:675px;line-height:20px;font-family:'Liberation Sans',sans-serif;font-size:10px;color:#0c0cff;font-weight:bold;letter-spacing:-0.114px;;transform:scaleY(0.875);transform-origin:0 13px">hyb protocol</div>
<div style="left:61.5px;top:691px;line-height:20px;font-family:'Liberation Sans',sans-serif;font-size:10px;color:#0c0cff;font-weight:bold;letter-spacing:0.048px;;transform:scaleY(0.875);transform-origin:0 13px">scan protocol</div>
<div style="left:61.5px;top:707px;line-height:20px;font-family:'Liberation Sans',sans-serif;font-size:10px;color:#0c0cff;font-weight:bold;letter-spacing:0.113px;;transform:scaleY(0.875);transform-origin:0 13px">data processing</div>
<div style="left:61.5px;top:723px;line-height:20px;font-family:'Liberation Sans',sans-serif;font-size:10px;color:#0c0cff;font-weight:bold;letter-spacing:0.116px;;transform:scaleY(0.875);transform-origin:0 13px">value definition</div>
<div style="left:61.6px;top:371px;line-height:20px;font-family:'Liberation Sans',sans-serif;font-size:10px;color:#339966;font-weight:normal;letter-spacing:0.197px;;transform:scaleY(0.875);transform-origin:0 13px">SAMPLE 1</div>
<div style="left:61.6px;top:387px;line-height:20px;font-family:'Liberation Sans',sans-serif;font-size:10px;color:#339966;font-weight:normal;letter-spacing:0.197px;;transform:scaleY(0.875);transform-origin:0 13px">SAMPLE 2</div>
<div style="left:61.6px;top:403px;line-height:20px;font-family:'Liberation Sans',sans-serif;font-size:10px;color:#339966;font-weight:normal;letter-spacing:0.197px;;transform:scaleY(0.875);transform-origin:0 13px">SAMPLE 3</div>
<div style="left:61.6px;top:419px;line-height:20px;font-family:'Liberation Sans',sans-serif;font-size:10px;color:#339966;font-weight:normal;letter-spacing:0.197px;;transform:scaleY(0.875);transform-origin:0 13px">SAMPLE 4</div>
<div style="left:61.6px;top:435px;line-height:20px;font-family:'Liberation Sans',sans-serif;font-size:10px;color:#339966;font-weight:normal;letter-spacing:0.197px;;transform:scaleY(0.875);transform-origin:0 13px">SAMPLE 5</div>
<div style="left:61.6px;top:451px;line-height:20px;font-family:'Liberation Sans',sans-serif;font-size:10px;color:#339966;font-weight:normal;letter-spacing:0.197px;;transform:scaleY(0.875);transform-origin:0 13px">SAMPLE 6</div>
<div style="left:61.6px;top:467px;line-height:20px;font-family:'Liberation Sans',sans-serif;font-size:10px;color:#339966;font-weight:normal;letter-spacing:0.197px;;transform:scaleY(0.875);transform-origin:0 13px">SAMPLE 7</div>
<div style="left:61.6px;top:483px;line-height:20px;font-family:'Liberation Sans',sans-serif;font-size:10px;color:#339966;font-weight:normal;letter-spacing:0.197px;;transform:scaleY(0.875);transform-origin:0 13px">SAMPLE 8</div>
<div style="left:61.6px;top:499px;line-height:20px;font-family:'Liberation Sans',sans-serif;font-size:10px;color:#339966;font-weight:normal;letter-spacing:0.197px;;transform:scaleY(0.875);transform-origin:0 13px">SAMPLE 9</div>
<div style="left:61.6px;top:515px;line-height:20px;font-family:'Liberation Sans',sans-serif;font-size:10px;color:#339966;font-weight:normal;letter-spacing:0.059px;;transform:scaleY(0.875);transform-origin:0 13px">SAMPLE X</div>
<div style="left:241.5px;top:355px;line-height:20px;font-family:'Liberation Sans',sans-serif;font-size:10px;color:#0c0cff;font-weight:bold;letter-spacing:-0.096px;max-width:355px;overflow:hidden;transform:scaleY(0.875);transform-origin:0 13px">title</div>
<div style="left:361.5px;top:355px;line-height:20px;font-family:'Liberation Sans',sans-serif;font-size:10px;color:#0c0cff;font-weight:bold;letter-spacing:0.069px;max-width:235px;overflow:hidden;transform:scaleY(0.875);transform-origin:0 13px">CEL file</div>
<div style="left:452px;top:355px;line-height:20px;font-family:'Liberation Sans',sans-serif;font-size:10px;color:#0c0cff;font-weight:bold;letter-spacing:0.063px;max-width:144px;overflow:hidden;transform:scaleY(0.875);transform-origin:0 13px">source name</div>
<div style="left:547.5px;top:355px;line-height:20px;font-family:'Liberation Sans',sans-serif;font-size:10px;color:#0c0cff;font-weight:bold;letter-spacing:0.073px;max-width:49px;overflow:hidden;transform:scaleY(0.875);transform-origin:0 13px">organism</div>
<div style="left:240px;top:197px;width:119px;height:15px;background:#e4f0e4;border:2px solid #63a667;border-radius:4px"></div>
<div style="left:241.5px;top:195px;line-height:20px;font-family:'Liberation Sans',sans-serif;font-size:10px;color:#000;font-weight:normal;letter-spacing:0.385px;;transform:scaleY(0.875);transform-origin:0 13px">methylation_profiling</div>
<div style="left:240px;top:213px;width:119px;height:15px;background:#d5e6e5;border:2px solid #63a667;border-radius:4px"></div>
<div style="left:241.5px;top:211px;line-height:20px;font-family:'Liberation Sans',sans-serif;font-size:10px;color:#000;font-weight:normal;letter-spacing:0.280px;;transform:scaleY(0.875);transform-origin:0 13px">ExperimentDesignType</div>
<div style="left:240px;top:229px;width:119px;height:15px;background:#e4f0e4;border:2px solid #63a667;border-radius:4px"></div>
<div style="left:241.5px;top:227px;line-height:20px;font-family:'Liberation Sans',sans-serif;font-size:10px;color:#000;font-weight:normal;letter-spacing:0.187px;;transform:scaleY(0.875);transform-origin:0 13px">microarray</div>
<div style="left:240px;top:245px;width:119px;height:15px;background:#e4f0e4;border:2px solid #63a667;border-radius:4px"></div>
<div style="left:241.5px;top:243px;line-height:20px;font-family:'Liberation Sans',sans-serif;font-size:10px;color:#000;font-weight:normal;letter-spacing:0.221px;;transform:scaleY(0.875);transform-origin:0 13px">QualityControlDescript...</div>
<div style="left:240px;top:277px;width:119px;height:15px;background:#e4f0e4;border:2px solid #63a667;border-radius:4px"></div>
<div style="left:241.5px;top:275px;line-height:20px;font-family:'Liberation Sans',sans-serif;font-size:10px;color:#000;font-weight:normal;letter-spacing:0.311px;;transform:scaleY(0.875);transform-origin:0 13px">Project</div>
<div style="left:546px;top:373px;width:50px;height:159px;background:#e4f0e4;"></div>
<div style="left:547px;top:388px;width:49px;height:1px;background:#c9d3c9;"></div>
<div style="left:547.5px;top:371px;line-height:20px;font-family:'Liberation Sans',sans-serif;font-size:10px;color:#000;font-weight:normal;letter-spacing:0.170px;;transform:scaleY(0.875);transform-origin:0 13px">organism</div>
<div style="left:547px;top:404px;width:49px;height:1px;background:#c9d3c9;"></div>
<div style="left:547.5px;top:387px;line-height:20px;font-family:'Liberation Sans',sans-serif;font-size:10px;color:#000;font-weight:normal;letter-spacing:0.170px;;transform:scaleY(0.875);transform-origin:0 13px">organism</div>
<div style="left:547px;top:420px;width:49px;height:1px;background:#c9d3c9;"></div>
<div style="left:547.5px;top:403px;line-height:20px;font-family:'Liberation Sans',sans-serif;font-size:10px;color:#000;font-weight:normal;letter-spacing:0.170px;;transform:scaleY(0.875);transform-origin:0 13px">organism</div>
<div style="left:547px;top:436px;width:49px;height:1px;background:#c9d3c9;"></div>
<div style="left:547.5px;top:419px;line-height:20px;font-family:'Liberation Sans',sans-serif;font-size:10px;color:#000;font-weight:normal;letter-spacing:0.170px;;transform:scaleY(0.875);transform-origin:0 13px">organism</div>
<div style="left:547px;top:452px;width:49px;height:1px;background:#c9d3c9;"></div>
<div style="left:547.5px;top:435px;line-height:20px;font-family:'Liberation Sans',sans-serif;font-size:10px;color:#000;font-weight:normal;letter-spacing:0.170px;;transform:scaleY(0.875);transform-origin:0 13px">organism</div>
<div style="left:547px;top:468px;width:49px;height:1px;background:#c9d3c9;"></div>
<div style="left:547.5px;top:451px;line-height:20px;font-family:'Liberation Sans',sans-serif;font-size:10px;color:#000;font-weight:normal;letter-spacing:0.170px;;transform:scaleY(0.875);transform-origin:0 13px">organism</div>
<div style="left:547px;top:484px;width:49px;height:1px;background:#c9d3c9;"></div>
<div style="left:547.5px;top:467px;line-height:20px;font-family:'Liberation Sans',sans-serif;font-size:10px;color:#000;font-weight:normal;letter-spacing:0.170px;;transform:scaleY(0.875);transform-origin:0 13px">organism</div>
<div style="left:547px;top:500px;width:49px;height:1px;background:#c9d3c9;"></div>
<div style="left:547.5px;top:483px;line-height:20px;font-family:'Liberation Sans',sans-serif;font-size:10px;color:#000;font-weight:normal;letter-spacing:0.170px;;transform:scaleY(0.875);transform-origin:0 13px">organism</div>
<div style="left:547px;top:516px;width:49px;height:1px;background:#c9d3c9;"></div>
<div style="left:547.5px;top:499px;line-height:20px;font-family:'Liberation Sans',sans-serif;font-size:10px;color:#000;font-weight:normal;letter-spacing:0.170px;;transform:scaleY(0.875);transform-origin:0 13px">organism</div>
<div style="left:547.5px;top:515px;line-height:20px;font-family:'Liberation Sans',sans-serif;font-size:10px;color:#000;font-weight:normal;letter-spacing:0.170px;;transform:scaleY(0.875);transform-origin:0 13px">organism</div>
<div style="left:546px;top:373px;width:60px;height:159px;background:transparent;border:2px solid #63a667;border-radius:4px;clip-path:inset(0 10px 0 0)"></div>
<div style="left:597px;top:69px;width:15px;height:716px;background:linear-gradient(90deg,#e6e6e6 0,#eeeeee 30%,#f3f3f3 100%);"></div>
<svg style="left:601px;top:75px" width="9" height="6" viewBox="0 0 9 6"><defs><linearGradient id="ga" x1="0" x2="1"><stop offset="0" stop-color="#1c1c1c"/><stop offset="1" stop-color="#7a7a7a"/></linearGradient></defs><path d="M0.6 5 L4.4 0.8 L8.2 5Z" fill="url(#ga)"/></svg>
<svg style="left:601px;top:773px" width="9" height="6" viewBox="0 0 9 6"><path d="M0.6 1 L4.4 5.2 L8.2 1Z" fill="url(#ga)"/></svg>
<div style="left:597px;top:87px;width:15px;height:6px;background:linear-gradient(90deg,#f6f6f6 0,#e4e4e4 45%,#cdcdcd 75%,#e2e2e2 100%);border:1px solid #8e8e8e;border-radius:2px"></div>
<div style="left:60px;top:785px;width:536px;height:16px;background:linear-gradient(#e6e6e6 0,#eeeeee 30%,#f3f3f3 100%);"></div>
<div style="left:596px;top:785px;width:17px;height:16px;background:#f0f0f0;"></div>
<svg style="left:65px;top:788px" width="6" height="9" viewBox="0 0 6 9"><defs><linearGradient id="gb" x1="0" x2="0" y1="0" y2="1"><stop offset="0" stop-color="#1c1c1c"/><stop offset="1" stop-color="#7a7a7a"/></linearGradient></defs><path d="M5 1 L1 4.5 L5 8Z" fill="url(#gb)"/></svg>
<svg style="left:585px;top:788px" width="6" height="9" viewBox="0 0 6 9"><path d="M1 1 L5 4.5 L1 8Z" fill="url(#gb)"/></svg>
<div style="left:78px;top:785px;width:18px;height:15px;background:linear-gradient(#f6f6f6 0,#e6e6e6 45%,#d2d2d2 75%,#e2e2e2 100%);border:1px solid #8e8e8e;border-radius:2px"></div>
<div style="left:83px;top:789px;width:1px;height:7px;background:#4a4a4a;"></div>
<div style="left:84px;top:789px;width:1px;height:7px;background:#fff;"></div>
<div style="left:86px;top:789px;width:1px;height:7px;background:#4a4a4a;"></div>
<div style="left:87px;top:789px;width:1px;height:7px;background:#fff;"></div>
<div style="left:89px;top:789px;width:1px;height:7px;background:#4a4a4a;"></div>
<div style="left:90px;top:789px;width:1px;height:7px;background:#fff;"></div>
<div style="left:8px;top:806px;width:1px;height:20px;background:#8b909b;"></div>
<div style="left:8px;top:825px;width:60px;height:1px;background:#8b909b;"></div>
<div style="left:67px;top:806px;width:1px;height:20px;background:#8b909b;"></div>
<div style="left:9px;top:805px;width:58px;height:20px;background:#fff;"></div>
<div style="left:14.3px;top:807px;line-height:20px;font-family:'DejaVu Sans Condensed','Liberation Sans',sans-serif;font-size:11.3px;color:#000;font-weight:normal;letter-spacing:-0.293px;">Metadata</div>
<div style="left:67px;top:805px;width:86px;height:19px;background:linear-gradient(#f3f3f3 0,#ececec 45%,#dedede 50%,#d2d2d2 100%);border:1px solid #8e8f8f"></div>
<div style="left:72.5px;top:805px;line-height:20px;font-family:'DejaVu Sans Condensed','Liberation Sans',sans-serif;font-size:11.3px;color:#000;font-weight:normal;letter-spacing:-0.314px;">Matrix Template</div>
<div style="left:620px;top:50px;width:314px;height:777px;background:#f0f0f0;"></div>
<div style="left:620px;top:50px;width:314px;height:1px;background:#696969;"></div>
<div style="left:620px;top:50px;width:1px;height:777px;background:#696969;"></div>
<div style="left:621px;top:51px;width:313px;height:1px;background:#fff;"></div>
<div style="left:621px;top:51px;width:1px;height:776px;background:#fff;"></div>
<div style="left:723px;top:60px;line-height:20px;font-family:'DejaVu Sans Condensed','Liberation Sans',sans-serif;font-size:10.6px;color:#000;font-weight:normal;letter-spacing:-0.109px;">Selected cells: B10:B10</div>
<div style="left:631.3px;top:80px;line-height:20px;font-family:'DejaVu Sans Condensed','Liberation Sans',sans-serif;font-size:10.6px;color:#6b7e97;font-weight:bold;letter-spacing:-0.128px;">ONTOLOGY HIERARCHIES</div>
<div style="left:648px;top:102px;width:274px;height:20px;background:#fff;border:1px solid #abadb3"></div>
<div style="left:920px;top:151px;width:2px;height:327px;background:#fff;"></div>
<div style="left:649px;top:476px;width:273px;height:2px;background:#fff;"></div>
<div style="left:648px;top:151px;width:272px;height:325px;background:#fff;border:1px solid #898c95"></div>
<div style="left:650px;top:130px;width:100px;height:22px;background:linear-gradient(#f3f3f3 0,#ececec 45%,#dedede 50%,#d0d0d0 100%);border:1px solid #898c95"></div>
<div style="left:655.7px;top:132px;line-height:20px;font-family:'DejaVu Sans Condensed','Liberation Sans',sans-serif;font-size:11.3px;color:#000;font-weight:normal;letter-spacing:-0.159px;">JERMOntology</div>
<div style="left:732.8px;top:131px;line-height:20px;font-family:'DejaVu Sans Condensed','Liberation Sans',sans-serif;font-size:11px;color:#c3c3c3;font-weight:normal;letter-spacing:0.141px;">x</div>
<div style="left:749px;top:128px;width:125px;height:24px;background:#fff;border:1px solid #898c95;border-bottom:none"></div>
<div style="left:755.7px;top:130px;line-height:20px;font-family:'DejaVu Sans Condensed','Liberation Sans',sans-serif;font-size:11.3px;color:#000;font-weight:normal;letter-spacing:-0.276px;">MGEDOntology.owl</div>
<div style="left:854.8px;top:129px;line-height:20px;font-family:'DejaVu Sans Condensed','Liberation Sans',sans-serif;font-size:11px;color:#8f9db2;font-weight:normal;letter-spacing:0.141px;">x</div>
<div style="left:650px;top:155px;width:269px;height:319px;background:#fff;border:1px solid #b4b6ba"></div>
<div style="left:902px;top:156px;width:16px;height:317px;background:linear-gradient(90deg,#e6e6e6 0,#eeeeee 30%,#f3f3f3 100%);"></div>
<svg style="left:906px;top:162px" width="9" height="6" viewBox="0 0 9 6"><path d="M0.6 5 L4.4 0.8 L8.2 5Z" fill="url(#ga)"/></svg>
<svg style="left:906px;top:462px" width="9" height="6" viewBox="0 0 9 6"><path d="M0.6 1 L4.4 5.2 L8.2 1Z" fill="url(#ga)"/></svg>
<div style="left:903px;top:228px;width:14px;height:114px;background:linear-gradient(90deg,#f6f6f6 0,#e8e8e8 40%,#d0d0d0 55%,#c8c8c8 80%,#dcdcdc 100%);border:1px solid #8e8e8e;border-radius:2px"></div>
<div style="left:906px;top:281px;width:8px;height:1px;background:#4a4a4a;"></div>
<div style="left:906px;top:282px;width:8px;height:1px;background:#fff;"></div>
<div style="left:906px;top:284px;width:8px;height:1px;background:#4a4a4a;"></div>
<div style="left:906px;top:285px;width:8px;height:1px;background:#fff;"></div>
<div style="left:906px;top:287px;width:8px;height:1px;background:#4a4a4a;"></div>
<div style="left:906px;top:288px;width:8px;height:1px;background:#fff;"></div>
<div class="vd" style="left:659px;top:157px;height:316px"></div>
<div class="vd" style="left:678px;top:157px;height:316px"></div>
<div class="vd" style="left:697px;top:157px;height:316px"></div>
<div class="vd" style="left:716px;top:281px;height:192px"></div>
<div class="vd" style="left:735px;top:361px;height:88px"></div>
<div class="hd" style="left:703px;top:161px;width:5px"></div>
<div class="exp p" style="left:693px;top:157px"></div>
<div class="rad" style="left:711px;top:154px;clip-path:inset(1.6px 0 0 0)"></div>
<div style="left:731.8px;top:151px;line-height:20px;font-family:'DejaVu Sans Condensed','Liberation Sans',sans-serif;font-size:10.6px;color:#000;font-weight:normal;letter-spacing:-0.071px;">BioSequencePackage</div>
<div class="hd" style="left:703px;top:177px;width:5px"></div>
<div class="exp p" style="left:693px;top:173px"></div>
<div class="rad" style="left:711px;top:170px"></div>
<div style="left:731.8px;top:167px;line-height:20px;font-family:'DejaVu Sans Condensed','Liberation Sans',sans-serif;font-size:10.6px;color:#000;font-weight:normal;letter-spacing:-0.077px;">CancerSite</div>
<div class="hd" style="left:703px;top:193px;width:5px"></div>
<div class="exp p" style="left:693px;top:189px"></div>
<div class="rad" style="left:711px;top:186px"></div>
<div style="left:731.8px;top:183px;line-height:20px;font-family:'DejaVu Sans Condensed','Liberation Sans',sans-serif;font-size:10.6px;color:#000;font-weight:normal;letter-spacing:0.227px;">DataType</div>
<div class="hd" style="left:703px;top:209px;width:5px"></div>
<div class="exp p" style="left:693px;top:205px"></div>
<div class="rad" style="left:711px;top:202px"></div>
<div style="left:731.8px;top:199px;line-height:20px;font-family:'DejaVu Sans Condensed','Liberation Sans',sans-serif;font-size:10.6px;color:#000;font-weight:normal;letter-spacing:0.073px;">DeprecatedTerms</div>
<div class="hd" style="left:703px;top:225px;width:5px"></div>
<div class="exp p" style="left:693px;top:221px"></div>
<div class="rad" style="left:711px;top:218px"></div>
<div style="left:731.8px;top:215px;line-height:20px;font-family:'DejaVu Sans Condensed','Liberation Sans',sans-serif;font-size:10.6px;color:#000;font-weight:normal;letter-spacing:0.015px;">DeprecationReason</div>
<div class="hd" style="left:703px;top:241px;width:5px"></div>
<div class="exp p" style="left:693px;top:237px"></div>
<div class="rad" style="left:711px;top:234px"></div>
<div style="left:731.8px;top:231px;line-height:20px;font-family:'DejaVu Sans Condensed','Liberation Sans',sans-serif;font-size:10.6px;color:#000;font-weight:normal;letter-spacing:-0.085px;">DescriptionPackage</div>
<div class="hd" style="left:703px;top:257px;width:5px"></div>
<div class="exp p" style="left:693px;top:253px"></div>
<div class="rad" style="left:711px;top:250px"></div>
<div style="left:731.8px;top:247px;line-height:20px;font-family:'DejaVu Sans Condensed','Liberation Sans',sans-serif;font-size:10.6px;color:#000;font-weight:normal;letter-spacing:-0.116px;">DesignElementPackage</div>
<div class="hd" style="left:703px;top:273px;width:5px"></div>
<div class="exp " style="left:693px;top:269px"></div>
<div class="rad" style="left:711px;top:266px"></div>
<div style="left:731.8px;top:263px;line-height:20px;font-family:'DejaVu Sans Condensed','Liberation Sans',sans-serif;font-size:10.6px;color:#000;font-weight:normal;letter-spacing:-0.072px;">ExperimentPackage</div>
<div class="hd" style="left:716px;top:289px;width:11px"></div>
<div class="rad" style="left:730px;top:282px"></div>
<div style="left:750.8px;top:279px;line-height:20px;font-family:'DejaVu Sans Condensed','Liberation Sans',sans-serif;font-size:10.6px;color:#000;font-weight:normal;letter-spacing:-0.068px;">Experiment</div>
<div class="hd" style="left:716px;top:305px;width:11px"></div>
<div class="rad" style="left:730px;top:298px"></div>
<div style="left:750.8px;top:295px;line-height:20px;font-family:'DejaVu Sans Condensed','Liberation Sans',sans-serif;font-size:10.6px;color:#000;font-weight:normal;letter-spacing:-0.013px;">ExperimentalFactor</div>
<div class="hd" style="left:722px;top:321px;width:5px"></div>
<div class="exp p" style="left:712px;top:317px"></div>
<div class="rad" style="left:730px;top:314px"></div>
<div style="left:750.8px;top:311px;line-height:20px;font-family:'DejaVu Sans Condensed','Liberation Sans',sans-serif;font-size:10.6px;color:#000;font-weight:normal;letter-spacing:0.055px;">ExperimentalFactorCategory</div>
<div class="hd" style="left:716px;top:337px;width:11px"></div>
<div class="rad" style="left:730px;top:330px"></div>
<div style="left:750.8px;top:327px;line-height:20px;font-family:'DejaVu Sans Condensed','Liberation Sans',sans-serif;font-size:10.6px;color:#000;font-weight:normal;letter-spacing:-0.124px;">ExperimentDesign</div>
<div class="hd" style="left:722px;top:353px;width:5px"></div>
<div class="exp " style="left:712px;top:349px"></div>
<div class="rad" style="left:730px;top:346px"></div>
<div style="left:750px;top:345px;width:114px;height:16px;background:#3399ff;"></div>
<div style="left:750.8px;top:343px;line-height:20px;font-family:'DejaVu Sans Condensed','Liberation Sans',sans-serif;font-size:10.6px;color:#fff;font-weight:normal;letter-spacing:0.034px;">ExperimentDesignType</div>
<div class="hd" style="left:741px;top:369px;width:5px"></div>
<div class="exp p" style="left:731px;top:365px"></div>
<div class="rad" style="left:749px;top:362px"></div>
<div style="left:769.8px;top:359px;line-height:20px;font-family:'DejaVu Sans Condensed','Liberation Sans',sans-serif;font-size:10.6px;color:#000;font-weight:normal;letter-spacing:-0.101px;">BiologicalProperty</div>
<div class="hd" style="left:741px;top:385px;width:5px"></div>
<div class="exp p" style="left:731px;top:381px"></div>
<div class="rad" style="left:749px;top:378px"></div>
<div style="left:769.8px;top:375px;line-height:20px;font-family:'DejaVu Sans Condensed','Liberation Sans',sans-serif;font-size:10.6px;color:#000;font-weight:normal;letter-spacing:-0.092px;">BioMolecularAnnotation</div>
<div class="hd" style="left:741px;top:401px;width:5px"></div>
<div class="exp p" style="left:731px;top:397px"></div>
<div class="rad" style="left:749px;top:394px"></div>
<div style="left:769.8px;top:391px;line-height:20px;font-family:'DejaVu Sans Condensed','Liberation Sans',sans-serif;font-size:10.6px;color:#000;font-weight:normal;letter-spacing:-0.268px;">EpidemiologicalDesign</div>
<div class="hd" style="left:741px;top:417px;width:5px"></div>
<div class="exp p" style="left:731px;top:413px"></div>
<div class="rad" style="left:749px;top:410px"></div>
<div style="left:769.8px;top:407px;line-height:20px;font-family:'DejaVu Sans Condensed','Liberation Sans',sans-serif;font-size:10.6px;color:#000;font-weight:normal;letter-spacing:-0.140px;">MethodologicalDesign</div>
<div class="hd" style="left:741px;top:433px;width:5px"></div>
<div class="exp p" style="left:731px;top:429px"></div>
<div class="rad" style="left:749px;top:426px"></div>
<div style="left:769.8px;top:423px;line-height:20px;font-family:'DejaVu Sans Condensed','Liberation Sans',sans-serif;font-size:10.6px;color:#000;font-weight:normal;letter-spacing:-0.045px;">PerturbationalDesign</div>
<div class="hd" style="left:741px;top:449px;width:5px"></div>
<div class="exp p" style="left:731px;top:445px"></div>
<div class="rad" style="left:749px;top:442px"></div>
<div style="left:769.8px;top:439px;line-height:20px;font-family:'DejaVu Sans Condensed','Liberation Sans',sans-serif;font-size:10.6px;color:#000;font-weight:normal;letter-spacing:-0.066px;">TechnologicalDesign</div>
<div class="hd" style="left:716px;top:465px;width:11px"></div>
<div class="rad" style="left:730px;top:458px"></div>
<div style="left:750.8px;top:455px;line-height:20px;font-family:'DejaVu Sans Condensed','Liberation Sans',sans-serif;font-size:10.6px;color:#000;font-weight:normal;letter-spacing:0.166px;">FactorValue</div>
<div style="left:631.5px;top:480px;line-height:20px;font-family:'DejaVu Sans Condensed','Liberation Sans',sans-serif;font-size:10.6px;color:#6b7e97;font-weight:bold;letter-spacing:-0.056px;">VALUE TYPE AND PROPERTY</div>
<div style="left:648px;top:502px;width:274px;height:20px;background:linear-gradient(#f3f3f3 0,#ececec 45%,#dedede 50%,#d0d0d0 100%);border:1px solid #8e8f8f;border-radius:2px;box-shadow:inset 0 0 0 1px rgba(255,255,255,.7)"></div>
<div style="left:651.3px;top:503px;line-height:20px;font-family:'DejaVu Sans Condensed','Liberation Sans',sans-serif;font-size:11.3px;color:#000;font-weight:normal;letter-spacing:-0.389px;">Direct subclasses</div>
<svg style="left:909px;top:512px" width="8" height="5"><path d="M0 0 L8 0 L4 4.6z" fill="#000"/></svg>
<div style="left:652px;top:527px;width:13px;height:13px;background:#f4f4f4;border:1px solid #8e8f8f"></div>
<div style="left:654px;top:529px;width:9px;height:9px;background:linear-gradient(135deg,#d5dade,#f6f7f8);border:1px solid #c2c7cc"></div>
<div style="left:668.9px;top:524px;line-height:20px;font-family:'DejaVu Sans Condensed','Liberation Sans',sans-serif;font-size:11.3px;color:#000;font-weight:normal;letter-spacing:-0.298px;">Include a property</div>
<div style="left:648px;top:545px;width:274px;height:20px;background:#f4f4f4;border:1px solid #adb2b5;border-radius:2px;box-shadow:inset 0 0 0 1px rgba(255,255,255,.7)"></div>
<div style="left:651.3px;top:546px;line-height:20px;font-family:'DejaVu Sans Condensed','Liberation Sans',sans-serif;font-size:11.3px;color:#8a8a8a;font-weight:normal;letter-spacing:-0.275px;">class_role</div>
<svg style="left:909px;top:555px" width="8" height="5"><path d="M0 0 L8 0 L4 4.6z" fill="#a5a5a5"/></svg>
<div style="left:631.3px;top:575px;line-height:20px;font-family:'DejaVu Sans Condensed','Liberation Sans',sans-serif;font-size:10.6px;color:#6b7e97;font-weight:bold;letter-spacing:0.139px;">ALLOWED VALUES</div>
<div style="left:648px;top:597px;width:274px;height:178px;background:#fff;border:1px solid #abadb3"></div>
<div class="rad" style="left:653px;top:602px"></div>
<div style="left:673.3px;top:599px;line-height:20px;font-family:'DejaVu Sans Condensed','Liberation Sans',sans-serif;font-size:10.6px;color:#000;font-weight:normal;letter-spacing:-0.083px;">BioMolecularAnnotation</div>
<div class="rad" style="left:653px;top:624px"></div>
<div style="left:673.3px;top:621px;line-height:20px;font-family:'DejaVu Sans Condensed','Liberation Sans',sans-serif;font-size:10.6px;color:#000;font-weight:normal;letter-spacing:-0.101px;">BiologicalProperty</div>
<div class="rad" style="left:653px;top:646px"></div>
<div style="left:673.3px;top:643px;line-height:20px;font-family:'DejaVu Sans Condensed','Liberation Sans',sans-serif;font-size:10.6px;color:#000;font-weight:normal;letter-spacing:-0.268px;">EpidemiologicalDesign</div>
<div class="rad" style="left:653px;top:668px"></div>
<div style="left:673.3px;top:665px;line-height:20px;font-family:'DejaVu Sans Condensed','Liberation Sans',sans-serif;font-size:10.6px;color:#000;font-weight:normal;letter-spacing:-0.140px;">MethodologicalDesign</div>
<div class="rad" style="left:653px;top:690px"></div>
<div style="left:673.3px;top:687px;line-height:20px;font-family:'DejaVu Sans Condensed','Liberation Sans',sans-serif;font-size:10.6px;color:#000;font-weight:normal;letter-spacing:-0.045px;">PerturbationalDesign</div>
<div class="rad" style="left:653px;top:712px"></div>
<div style="left:673.3px;top:709px;line-height:20px;font-family:'DejaVu Sans Condensed','Liberation Sans',sans-serif;font-size:10.6px;color:#000;font-weight:normal;letter-spacing:-0.066px;">TechnologicalDesign</div>
<div style="left:864px;top:793px;width:57px;height:21px;background:#f4f4f4;border:1px solid #adb2b5;border-radius:3px;box-shadow:inset 0 0 0 1px rgba(255,255,255,.7)"></div>
<div style="left:878.5px;top:794px;line-height:20px;font-family:'DejaVu Sans Condensed','Liberation Sans',sans-serif;font-size:11.3px;color:#8a8a8a;font-weight:normal;letter-spacing:-0.441px;">Apply</div>
</body></html>
